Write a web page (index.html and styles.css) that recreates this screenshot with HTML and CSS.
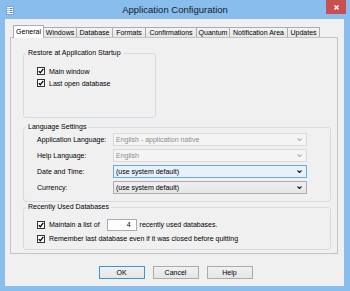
FILE: index.html
```html
<!DOCTYPE html>
<html lang="en">

<head>
  <meta charset="UTF-8">
  <meta name="viewport" content="width=device-width, initial-scale=1.0">
  <title>Application Configuration</title>
  <link rel="stylesheet" href="styles.css">
</head>

<body>
  <div class="window">
    <div class="titlebar">
      <svg class="app-icon" width="8" height="9" viewBox="0 0 8 9">
        <rect x=".5" y=".5" width="7" height="8" fill="#fff" stroke="#7aa6d8" />
        <path d="M1.5 2.5h1M1.5 4.5h1M1.5 6.5h1" stroke="#58a84a" />
        <path d="M3.5 2.5h3M3.5 4.5h3M3.5 6.5h3" stroke="#4a7fc1" />
      </svg>
      <div class="title">Application Configuration</div>
      <div class="close">
        <svg width="5" height="5" viewBox="0 0 5 5">
          <path d="M.5 .5L4.5 4.5M4.5 .5L.5 4.5" stroke="#fff" stroke-width="1.4" />
        </svg>
      </div>
    </div>

    <div class="client">
      <div class="tabs">
        <div class="tab tab-general selected">General</div>
        <div class="tab tab-windows">Windows</div>
        <div class="tab tab-database">Database</div>
        <div class="tab tab-formats">Formats</div>
        <div class="tab tab-confirm">Confirmations</div>
        <div class="tab tab-quantum">Quantum</div>
        <div class="tab tab-notify">Notification Area</div>
        <div class="tab tab-updates">Updates</div>
      </div>

      <div class="panel">
        <fieldset class="group group-restore">
          <legend>Restore at Application Startup</legend>
          <div class="check">
            <svg class="box" width="8" height="8" viewBox="0 0 8 8">
              <rect x=".5" y=".5" width="7" height="7" fill="#fff" stroke="#333" />
              <path d="M1.8 4.1L3.3 5.8L6.3 1.9" fill="none" stroke="#000" stroke-width="1.3" />
            </svg>
            <span>Main window</span>
          </div>
          <div class="check">
            <svg class="box" width="8" height="8" viewBox="0 0 8 8">
              <rect x=".5" y=".5" width="7" height="7" fill="#fff" stroke="#333" />
              <path d="M1.8 4.1L3.3 5.8L6.3 1.9" fill="none" stroke="#000" stroke-width="1.3" />
            </svg>
            <span>Last open database</span>
          </div>
        </fieldset>

        <fieldset class="group group-language">
          <legend>Language Settings</legend>
          <div class="field">
            <span class="field-label">Application Language:</span>
            <div class="combo disabled">
              <span>English - application native</span>
              <svg width="5" height="3" viewBox="0 0 5 3"><path d="M.5 .5L2.5 2.5L4.5 .5" fill="none" stroke="#b5b5b5" stroke-width="1.1" /></svg>
            </div>
          </div>
          <div class="field">
            <span class="field-label">Help Language:</span>
            <div class="combo disabled">
              <span>English</span>
              <svg width="5" height="3" viewBox="0 0 5 3"><path d="M.5 .5L2.5 2.5L4.5 .5" fill="none" stroke="#b5b5b5" stroke-width="1.1" /></svg>
            </div>
          </div>
          <div class="field">
            <span class="field-label">Date and Time:</span>
            <div class="combo hover">
              <span>(use system default)</span>
              <svg width="5" height="3" viewBox="0 0 5 3"><path d="M.5 .5L2.5 2.5L4.5 .5" fill="none" stroke="#222" stroke-width="1.2" /></svg>
            </div>
          </div>
          <div class="field">
            <span class="field-label">Currency:</span>
            <div class="combo">
              <span>(use system default)</span>
              <svg width="5" height="3" viewBox="0 0 5 3"><path d="M.5 .5L2.5 2.5L4.5 .5" fill="none" stroke="#222" stroke-width="1.2" /></svg>
            </div>
          </div>
        </fieldset>

        <fieldset class="group group-recent">
          <legend>Recently Used Databases</legend>
          <div class="check">
            <svg class="box" width="8" height="8" viewBox="0 0 8 8">
              <rect x=".5" y=".5" width="7" height="7" fill="#fff" stroke="#333" />
              <path d="M1.8 4.1L3.3 5.8L6.3 1.9" fill="none" stroke="#000" stroke-width="1.3" />
            </svg>
            <span class="list-label">Maintain a list of</span>
            <span class="number">4</span>
            <span class="after">recently used databases.</span>
          </div>
          <div class="check">
            <svg class="box" width="8" height="8" viewBox="0 0 8 8">
              <rect x=".5" y=".5" width="7" height="7" fill="#fff" stroke="#333" />
              <path d="M1.8 4.1L3.3 5.8L6.3 1.9" fill="none" stroke="#000" stroke-width="1.3" />
            </svg>
            <span>Remember last database even if it was closed before quitting</span>
          </div>
        </fieldset>
      </div>

      <div class="buttons">
        <button class="btn default">OK</button>
        <button class="btn">Cancel</button>
        <button class="btn">Help</button>
      </div>
    </div>
  </div>
</body>

</html>
```

FILE: styles.css
```css
* {
  box-sizing: border-box;
}

body {
  margin: 0;
  font-family: "Liberation Sans", Arial, sans-serif;
  font-size: 7px;
  color: #000;
}

.window {
  width: 350px;
  height: 291px;
  background: #88bdee;
  padding-bottom: 5px;
  display: flex;
  flex-direction: column;
}

.titlebar {
  height: 19px;
  flex: none;
  display: grid;
  grid-template-columns: 1fr auto 1fr;
  align-items: start;
}

.app-icon {
  display: block;
  margin: 6px 0 0 6px;
}

.title {
  font-size: 9.5px;
  line-height: 19px;
  color: #1a1a1a;
}

.close {
  justify-self: end;
  width: 20px;
  height: 14px;
  margin-right: 4px;
  background: #c75050;
  display: flex;
  align-items: center;
  justify-content: center;
}

.close svg {
  display: block;
}

.client {
  flex: 1;
  margin: 0 6px 0 5px;
  background: #f0f0f0;
  padding: 6px 6px 0 5px;
}

/* tab strip */
.tabs {
  display: flex;
  align-items: flex-end;
  height: 13px;
  margin-bottom: -1px;
  padding-left: 3px;
  position: relative;
  z-index: 1;
}

.tab {
  height: 10px;
  margin-bottom: 1px;
  margin-left: -1px;
  border: 1px solid #acacac;
  border-bottom: none;
  background: linear-gradient(#f3f3f3, #e6e6e6);
  text-align: center;
  line-height: 9px;
  white-space: nowrap;
}

.tab.selected {
  height: 13px;
  margin-bottom: 0;
  margin-left: 0;
  background: #fff;
  line-height: 11px;
}

.tab-general { width: 31px; }
.tab-windows { width: 34px; }
.tab-database { width: 37px; }
.tab-formats { width: 34px; }
.tab-confirm { width: 52px; }
.tab-quantum { width: 34px; }
.tab-notify { width: 59px; }
.tab-updates { width: 33px; }

.panel {
  height: 217px;
  border: 1px solid #c4c4c4;
  background: #f0f0f0;
  padding: 11px 6px 0 12px;
}

/* group boxes */
.group {
  margin: 0;
  border: 1px solid #d5dce2;
  border-radius: 3px;
  padding: 0 0 0 2px;
  min-width: 0;
}

.group legend {
  padding: 0 2px;
  line-height: 8px;
}

.group-restore {
  width: 133px;
  height: 69px;
  padding-top: 8px;
}

.group-language {
  width: 308px;
  height: 79px;
  margin-top: 5px;
  padding-top: 2px;
}

.group-recent {
  width: 308px;
  height: 47px;
  margin-top: 1px;
  padding-top: 7px;
}

.check {
  display: flex;
  align-items: center;
  gap: 4px;
  height: 12px;
  margin-left: 11px;
  white-space: nowrap;
}

.group-recent .check {
  height: 13px;
}

.group-recent .check + .check {
  margin-top: 1px;
}

.box {
  display: block;
  flex: none;
}

.number {
  width: 30px;
  height: 12px;
  margin-left: 3px;
  border: 1px solid #abadb3;
  background: #fff;
  text-align: right;
  padding-right: 5px;
  line-height: 10px;
}

.after {
  margin-left: -1px;
}

/* combo rows */
.field {
  display: flex;
  align-items: center;
  height: 13px;
  margin: 0 0 3px 11px;
}

.field-label {
  width: 76px;
  flex: none;
}

.combo {
  width: 194px;
  height: 13px;
  border: 1px solid #acacac;
  background: linear-gradient(#f0f0f0, #e5e5e5);
  display: flex;
  align-items: center;
  justify-content: space-between;
  padding: 0 4px 0 2px;
}

.combo svg {
  display: block;
}

.combo.disabled {
  background: #f4f4f4;
  border-color: #dadada;
  color: #8d8d8d;
}

.combo.hover {
  background: #e5f1fb;
  border-color: #6ea9e4;
}

/* dialog buttons */
.buttons {
  display: flex;
  justify-content: center;
  gap: 8px;
  margin-top: 12px;
  padding-left: 3px;
}

.btn {
  width: 46px;
  height: 13px;
  padding: 0;
  border: 1px solid #acacac;
  background: linear-gradient(#f0f0f0, #e5e5e5);
  font: inherit;
  color: #000;
  line-height: 11px;
}

.btn.default {
  border-color: #3c94dd;
}
```
